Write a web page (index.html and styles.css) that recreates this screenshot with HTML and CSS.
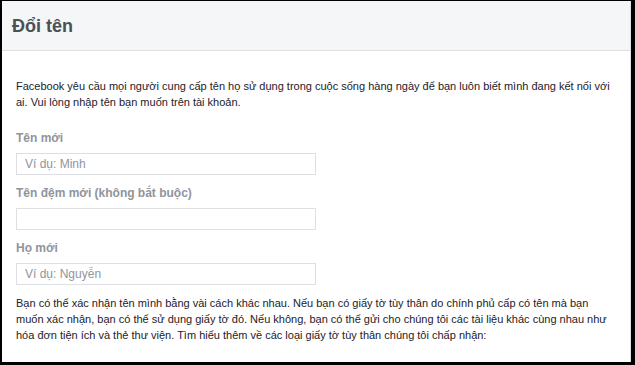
FILE: index.html
```html
<!DOCTYPE html>
<html lang="vi">
<head>
    <meta charset="UTF-8">
    <meta name="viewport" content="width=device-width, initial-scale=1.0">
    <title>Đổi tên</title>
    <link rel="stylesheet" href="styles.css">
</head>
<body>
    <div class="frame">
        <div class="panel">
            <div class="panel-header">
                <h2>Đổi tên</h2>
            </div>
            <div class="panel-body">
                <p class="intro">Facebook yêu cầu mọi người cung cấp tên họ sử dụng trong cuộc sống hàng ngày để bạn luôn biết mình đang kết nối với ai. Vui lòng nhập tên bạn muốn trên tài khoản.</p>

                <div class="field">
                    <label for="firstName">Tên mới</label>
                    <input type="text" id="firstName" placeholder="Ví dụ: Minh">
                </div>
                <div class="field">
                    <label for="middleName">Tên đệm mới (không bắt buộc)</label>
                    <input type="text" id="middleName">
                </div>
                <div class="field">
                    <label for="lastName">Họ mới</label>
                    <input type="text" id="lastName" placeholder="Ví dụ: Nguyễn">
                </div>

                <p class="note">Bạn có thể xác nhận tên mình bằng vài cách khác nhau. Nếu bạn có giấy tờ tùy thân do chính phủ cấp có tên mà bạn muốn xác nhận, bạn có thể sử dụng giấy tờ đó. Nếu không, bạn có thể gửi cho chúng tôi các tài liệu khác cùng nhau như hóa đơn tiện ích và thẻ thư viện. Tìm hiểu thêm về các loại giấy tờ tùy thân chúng tôi chấp nhận:</p>
            </div>
        </div>
    </div>
</body>
</html>
```

FILE: styles.css
```css
html, body {
    margin: 0;
    height: 100%;
}

body {
    background-color: #000;
    font-family: "Liberation Sans", Arial, sans-serif;
    font-size: 12px;
    color: #1d2129;
    overflow: hidden;
}

.frame {
    box-sizing: border-box;
    height: 100%;
    padding: 1px 3px 3px 2px;
}

.panel {
    box-sizing: border-box;
    height: 100%;
    background-color: #fff;
    border-right: 1px solid #dddfe2;
    margin-right: 1px;
}

.panel-header {
    box-sizing: border-box;
    height: 50px;
    background-color: #f5f6f7;
    border-bottom: 1px solid #dddfe2;
    display: flex;
    align-items: center;
    padding: 0 10px;
}

.panel-header h2 {
    margin: 0;
    font-size: 18px;
    font-weight: bold;
    color: #4b4f56;
    line-height: 22px;
}

.panel-body {
    padding: 27px 14px 0 14px;
}

.intro,
.note {
    margin: 0;
    font-size: 11px;
    line-height: 16px;
}

.intro {
    margin-bottom: 20px;
}

.field {
    display: flex;
    flex-direction: column;
    align-items: flex-start;
    margin-bottom: 10px;
}

.field label {
    font-weight: bold;
    color: #90949c;
    line-height: 16px;
    margin-bottom: 7px;
}

.field input {
    box-sizing: border-box;
    width: 300px;
    height: 22px;
    margin: 0;
    padding: 0 8px;
    border: 1px solid #dddfe2;
    font-family: "Liberation Sans", Arial, sans-serif;
    font-size: 12px;
    color: #1d2129;
    outline: none;
}

.field input::placeholder {
    color: #90949c;
}

.note {
    margin-top: 2px;
}
```
